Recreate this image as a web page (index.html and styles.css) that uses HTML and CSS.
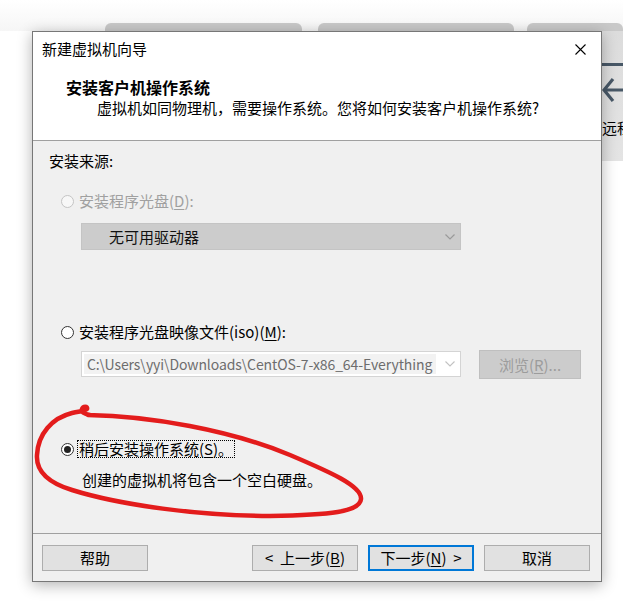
FILE: index.html
```html
<!doctype html>
<html>
    <head>
        <meta charset="UTF-8">
        <title>新建虚拟机向导</title>
        <link rel="stylesheet" href="styles.css">
    </head>
    <body>
        <div class="stage">
            <div class="tabs">                                          <!--后面窗口的标签-->
                <div class="tab t1"></div>
                <div class="tab t2"></div>
                <div class="tab t3"></div>
            </div>
            <div class="main">
                <div class="dialog">
                    <div class="titlebar">
                        <span class="title">新建虚拟机向导</span>
                        <span class="close">
                            <svg width="11" height="11" viewBox="0 0 11 11"><path d="M0.5 0.5L10.5 10.5M10.5 0.5L0.5 10.5" stroke="#000" stroke-width="1.1"/></svg>
                        </span>
                    </div>
                    <div class="header">
                        <div class="heading">安装客户机操作系统</div>
                        <div class="subtitle">虚拟机如同物理机，需要操作系统。您将如何安装客户机操作系统?</div>
                    </div>
                    <div class="content">
                        <div class="section-label">安装来源:</div>
                        <div class="radio disabled r1"><span class="dot"></span><span>安装程序光盘(<u>D</u>):</span></div>
                        <div class="combo c1">
                            <span class="combo-text">无可用驱动器</span>
                            <svg class="chev" width="10" height="6" viewBox="0 0 10 6"><path d="M0.5 0.5L5 5L9.5 0.5" fill="none" stroke="#9a9a9a" stroke-width="1.2"/></svg>
                        </div>
                        <div class="radio r2"><span class="dot"></span><span>安装程序光盘映像文件(iso)(<u>M</u>):</span></div>
                        <div class="iso-row">
                            <div class="combo c2">
                                <span class="path">C:\Users\yyi\Downloads\CentOS-7-x86_64-Everything</span>
                                <svg class="chev" width="10" height="6" viewBox="0 0 10 6"><path d="M0.5 0.5L5 5L9.5 0.5" fill="none" stroke="#c2c2c2" stroke-width="1.1"/></svg>
                            </div>
                            <div class="btn browse">浏览(<u>R</u>)...</div>
                        </div>
                        <div class="radio checked r3"><span class="dot"></span><span class="focus">稍后安装操作系统(<u>S</u>)。</span></div>
                        <div class="desc">创建的虚拟机将包含一个空白硬盘。</div>
                    </div>
                    <div class="footer">
                        <div class="btn">帮助</div>
                        <div class="btn back">&lt;&nbsp; 上一步(<u>B</u>)</div>
                        <div class="btn default">下一步(<u>N</u>)&nbsp; &gt;</div>
                        <div class="btn">取消</div>
                    </div>
                </div>
                <div class="side">                                      <!--右边露出的主窗口-->
                    <div class="side-bar"></div>
                    <svg class="side-arrow" width="21" height="28" viewBox="0 0 21 28"><path d="M11 3L2 14L11 25M2 14H21" fill="none" stroke="#485867" stroke-width="3.2"/></svg>
                    <div class="side-text">远程</div>
                </div>
            </div>
            <svg class="mark" width="623" height="607" viewBox="0 0 623 607">  <!--红色圈注-->
                <path d="M88 415 C150 416 230 430 290 455 C330 472 362 486 361 499 C360 512 330 515 270 516 C200 516 120 505 72 490 C46 482 36 470 37 455 C38 434 52 418 72 413 C80 411 86 411 87 409 C88 406 83 406 82 409 C81 412 84 414 90 415" fill="none" stroke="#e31c1c" stroke-width="4.5" stroke-linecap="round" stroke-linejoin="round"/>
            </svg>
        </div>
    </body>
</html>
```

FILE: styles.css
```css
*{
    margin: 0;
    padding: 0;
    box-sizing: border-box;
}
body{
    width: 623px;
    height: 607px;
    overflow: hidden;
    background: #fff;
    font-family: "Noto Sans CJK SC", "Noto Sans", sans-serif;
    font-size: 15px;
    color: #000;
}
u{
    text-underline-offset: 2px;
}
.stage{
    position: relative;
    height: 607px;
}
.tabs{                                  /*后面窗口的标签*/
    display: flex;
    height: 31px;
    padding: 23px 0 0 105px;
    background: linear-gradient(#fff, #f6f6f6);
}
.tab{
    height: 8px;
    border-radius: 6px 6px 0 0;
    background: #c9c9c9;
}
.t1{
    width: 197px;
}
.t2{
    width: 196px;
    margin-left: 16px;
}
.t3{
    flex: 1;
    margin-left: 13px;
}
.main{
    display: flex;
    padding-left: 32px;
}
.dialog{
    position: relative;
    z-index: 2;
    width: 570px;
    height: 551px;
    border: 1px solid #777;
    background: #f0f0f0;
    box-shadow: 0 3px 14px rgba(0,0,0,0.3);
    display: flex;
    flex-direction: column;
}
.titlebar{
    display: flex;
    justify-content: space-between;
    height: 34px;
    line-height: 34px;
    padding-left: 9px;
    background: #fff;
}
.close{
    display: flex;
    align-items: center;
    justify-content: center;
    width: 42px;
}
.header{
    height: 75px;
    padding: 11px 0 0 33px;
    background: #fff;
    border-bottom: 1px solid #a0a0a0;
}
.heading{
    font-size: 16px;
    font-weight: bold;
    line-height: 21px;
}
.subtitle{
    line-height: 20px;
    padding-left: 31px;
}
.content{
    height: 392px;
    padding: 10px 0 0 16px;
    line-height: 20px;
}
.radio{
    display: flex;
    align-items: center;
    gap: 5px;
    margin-left: 12px;
    height: 20px;
}
.dot{
    display: flex;
    align-items: center;
    justify-content: center;
    width: 13px;
    height: 13px;
    border: 1px solid #333;
    border-radius: 50%;
    background: #fff;
}
.disabled{
    color: #a0a0a0;
}
.disabled .dot{
    border-color: #c4c4c4;
    background: #f7f7f7;
}
.checked .dot::after{
    content: "";
    width: 7px;
    height: 7px;
    border-radius: 50%;
    background: #222;
}
.r1{
    margin-top: 20px;
}
.r2{
    margin-top: 72px;
}
.r3{
    margin-top: 60px;
    gap: 3px;
}
.focus{
    border: 1px dotted #000;
    padding: 0 1px;
    line-height: 16px;
}
.combo{
    display: flex;
    align-items: center;
    justify-content: space-between;
    width: 380px;
    margin-left: 32px;
    border: 1px solid #c4c4c4;
}
.chev{
    margin-right: 5px;
    flex: none;
}
.c1{
    height: 27px;
    margin-top: 12px;
    padding-left: 27px;
    background: #cccccc;
    color: #111;
}
.iso-row{
    display: flex;
    align-items: flex-start;
    gap: 18px;
    margin-top: 8px;
}
.c2{
    height: 26px;
    margin-top: 1px;
    padding: 2px 0 2px 2px;
    background: #fff;
    border-color: #d4d4d4;
}
.path{
    width: 352px;
    height: 20px;
    overflow: hidden;
    white-space: nowrap;
    padding-left: 3px;
    font-size: 14px;
    letter-spacing: -0.1px;
    background: #f2f2f2;
    color: #6d6d6d;
}
.desc{
    margin: 11px 0 0 33px;
}
.footer{
    display: flex;
    gap: 10px;
    padding: 11px 11px 10px 9px;
    border-top: 1px solid #a0a0a0;
}
.btn{
    width: 106px;
    height: 26px;
    line-height: 24px;
    text-align: center;
    border: 1px solid #adadad;
    background: #e1e1e1;
}
.back{
    margin-left: auto;
}
.default{
    border: 2px solid #0078d7;
    line-height: 22px;
}
.browse{
    width: 102px;
    height: 29px;
    line-height: 27px;
    background: #cccccc;
    border-color: #bfbfbf;
    color: #9c9c9c;
}
.side{                                  /*右边露出的主窗口*/
    flex: 1;
    height: 130px;
    overflow: hidden;
    background: linear-gradient(#dcdcdc, #e4e4e4);
    white-space: nowrap;
}
.side-bar{
    height: 3px;
    margin-top: 32px;
    background: #485867;
}
.side-arrow{
    display: block;
    margin-top: 10px;
}
.side-text{
    margin-top: 14px;
    line-height: 20px;
}
.mark{
    position: absolute;
    left: 0;
    top: 0;
    z-index: 3;
    pointer-events: none;
}
```
